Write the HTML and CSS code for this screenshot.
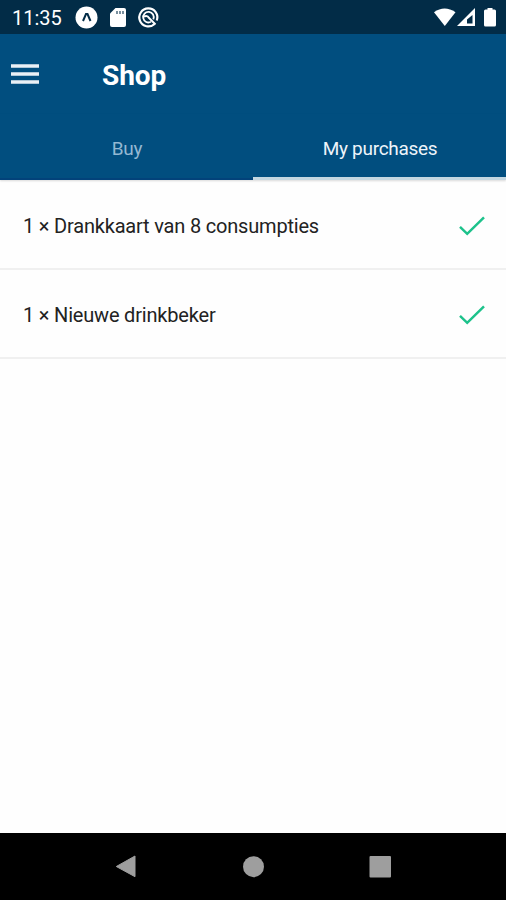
FILE: index.html
```html
<!DOCTYPE html>
<html lang="en">
<head>
	<title>Shop</title>

	<meta charset="UTF-8">
	<meta name="viewport" content="width=device-width, initial-scale=1">

	<link rel="stylesheet" href="styles.css">
</head>
<body>
	<div class="status-bar">
		<span class="time">11:35</span>
		<svg class="status-left" width="86" height="34" viewBox="75 0 86 34">
			<circle cx="86.5" cy="17.5" r="11" fill="#fff"/>
			<path d="M83 21L86 14H87.5L90.5 21" fill="none" stroke="#022c47" stroke-width="2"/>
			<path d="M115.5 8H124Q126 8 126 10V25Q126 27 124 27H112Q110 27 110 25V13.5Z" fill="#fff"/>
			<path d="M117 11V14M120 11V14M123 11V14" stroke="#4d6b7f" stroke-width="1.5"/>
			<path d="M154.5 24A9 9 0 1 1 156.8 20.5" fill="none" stroke="#fff" stroke-width="2.2"/>
			<path d="M151 21.8A5.3 5.3 0 1 1 153.3 19.3" fill="none" stroke="#fff" stroke-width="1.8"/>
			<path d="M144 16.5Q147.5 15 149 18L155.5 24.5" fill="none" stroke="#fff" stroke-width="2"/>
		</svg>
		<svg class="status-right" width="72" height="34" viewBox="434 0 72 34">
			<path d="M434 12.2Q444.5 4.8 455.5 12.2L444.8 26Z" fill="#fff"/>
			<path d="M475 8V26H457Z" fill="#fff"/>
			<path d="M472.5 15V23.5H467V19.5Z" fill="#022c47"/>
			<path d="M487.5 8H492.5V9.5H494.5Q496 9.5 496 11V25Q496 26.5 494.5 26.5H485.5Q484 26.5 484 25V11Q484 9.5 485.5 9.5H487.5Z" fill="#fff"/>
		</svg>
	</div>
	<div class="header">
		<svg class="menu" width="28" height="20" viewBox="0 0 28 20">
			<path d="M0 2H28M0 10H28M0 18H28" stroke="#e9f0f6" stroke-width="3.4"/>
		</svg>
		<h1 class="title">Shop</h1>
	</div>
	<div class="tabs">
		<div class="tab">Buy</div>
		<div class="tab tab-active">My purchases</div>
	</div>
	<div class="list">
		<div class="item">
			<span class="item-name">1 × Drankkaart van 8 consumpties</span>
			<svg class="check" width="26" height="20" viewBox="0 0 26 20">
				<path d="M1 10.8L8.2 17.8L25 1.3" fill="none" stroke="#1dc28b" stroke-width="2.5"/>
			</svg>
		</div>
		<div class="item">
			<span class="item-name">1 × Nieuwe drinkbeker</span>
			<svg class="check" width="26" height="20" viewBox="0 0 26 20">
				<path d="M1 10.8L8.2 17.8L25 1.3" fill="none" stroke="#1dc28b" stroke-width="2.5"/>
			</svg>
		</div>
	</div>
	<div class="nav-bar">
		<svg width="506" height="67" viewBox="0 0 506 67">
			<path d="M116.3 33.5L135 23V43.7Z" fill="#9e9e9e" stroke="#9e9e9e" stroke-linejoin="round"/>
			<circle cx="253.5" cy="33.7" r="10.5" fill="#9e9e9e"/>
			<rect x="369.5" y="23" width="21.5" height="21.5" rx="1" fill="#9e9e9e"/>
		</svg>
	</div>
</body>
</html>
```
FILE: styles.css
```css
* {
	margin: 0;
	padding: 0;
	box-sizing: border-box;
}

body {
	height: 900px;
	display: flex;
	flex-direction: column;
	overflow: hidden;
	background: #fefefe;
	font-family: Roboto, sans-serif;
}

svg {
	display: block;
	flex-shrink: 0;
}

.status-bar {
	height: 34px;
	display: flex;
	align-items: center;
	padding-left: 12px;
	background: #022c47;
	color: #fff;
}

.time {
	width: 63px;
	padding-top: 2px;
	font-size: 20px;
}

.status-right {
	margin-left: auto;
}

.header {
	height: 80px;
	display: flex;
	align-items: center;
	padding-left: 11px;
	background: #014e7f;
	color: #fff;
}

.title {
	margin-left: 63px;
	padding-top: 3px;
	font-size: 28px;
	font-weight: bold;
	letter-spacing: -0.1px;
}

.tabs {
	height: 66px;
	display: flex;
	background: #014e7f;
	box-shadow: 0 1px 2px rgba(0,0,0,0.15);
}

.tab {
	width: 50%;
	padding: 2px 0 0 1px;
	border-bottom: 2px solid #02427a;
	color: #94b8d2;
	font-size: 19px;
	line-height: 66px;
	letter-spacing: -0.3px;
	text-align: center;
}

.tab-active {
	border-bottom: 3px solid #c3d7e1;
	color: #eef4fa;
}

.list {
	flex: 1;
	padding-top: 1px;
}

.item {
	height: 89px;
	display: flex;
	align-items: center;
	justify-content: space-between;
	padding: 2px 21px 0 23px;
	border-bottom: 2px solid #f0f0f0;
	color: #222;
	font-size: 20px;
	letter-spacing: -0.19px;
}

.nav-bar {
	height: 67px;
	background: #000;
}
```
